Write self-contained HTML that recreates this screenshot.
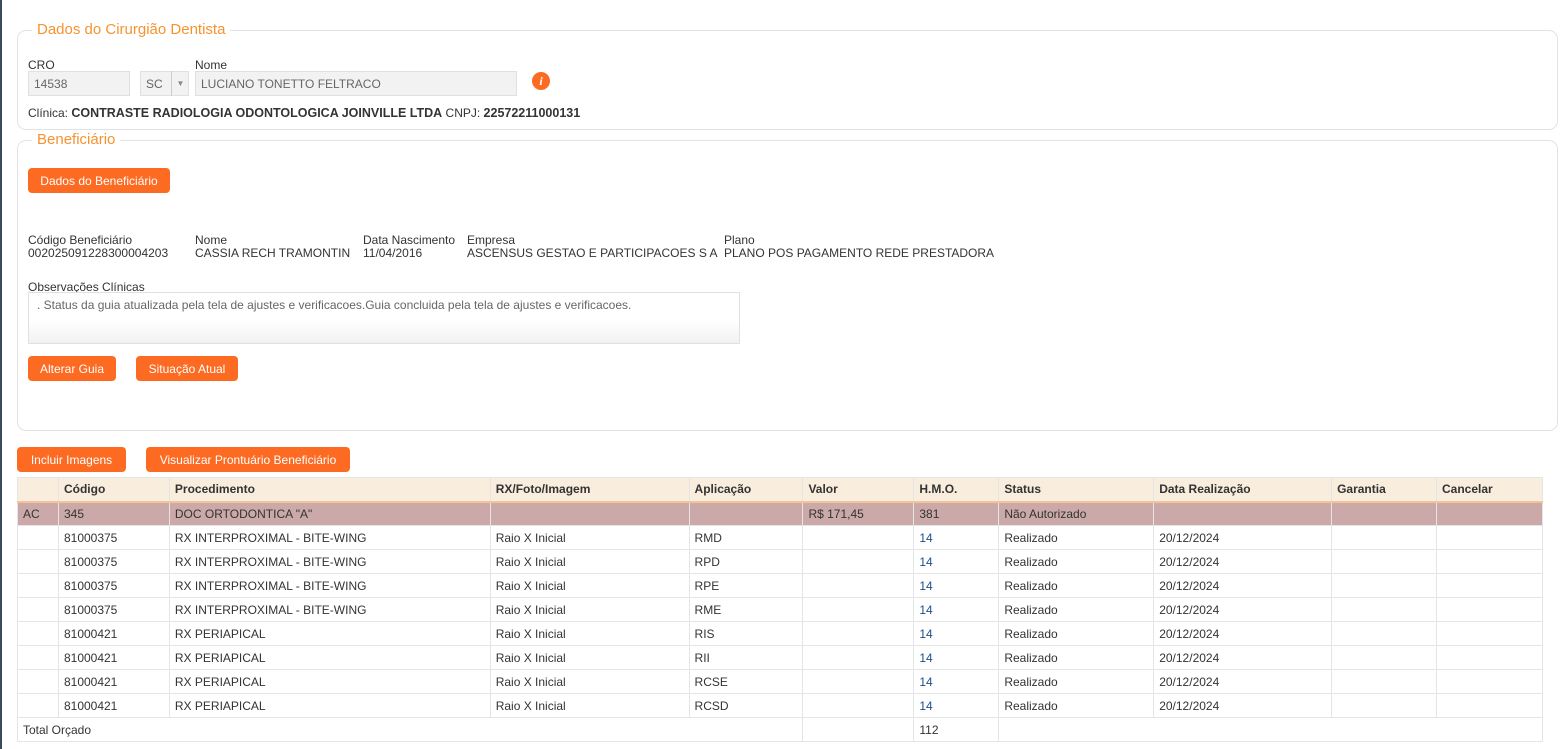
<!DOCTYPE html>
<html style="overflow:hidden"><head><meta charset="utf-8"><style>
*{box-sizing:border-box}
html,body{margin:0;width:1562px;height:749px;overflow:hidden}
body{background:#fff;font-family:"Liberation Sans",sans-serif;font-size:12px;color:#333;position:relative}
.a{position:absolute;white-space:nowrap}
.box{position:absolute;border:1px solid #e3e3e3;border-radius:9px}
.leg{position:absolute;background:#fff;color:#f7932f;font-size:15px;padding:0 5px}
.btn{position:absolute;background:#fd6a22;color:#fff;border-radius:4px;height:25px;line-height:25px;padding-top:1px;text-align:center;font-size:12px}
.inp{position:absolute;background:#f2f2f2;border:1px solid #e0e0e0;height:25px;line-height:24px;padding-left:5px;color:#666}
table{position:absolute;left:17px;top:477px;border-collapse:collapse;width:1526px;font-size:12px}
td,th{border:1px solid #e5e5e5;height:24px;padding:0 5px;text-align:left;white-space:nowrap}
th{background:#f9eddd;font-weight:bold;border-bottom:2px solid #f3c49a;color:#333}
tr.ac td{background:#cba9a8}
.b{color:#1d4f8c}
</style></head><body>
<div class="a" style="left:0;top:0;width:2px;height:749px;background:#3a4a5a"></div>
<div class="box" style="left:17px;top:30px;width:1541px;height:100px"></div>
<div class="leg" style="left:32px;top:21px">Dados do Cirurgião Dentista</div>
<div class="a" style="left:28px;top:58px">CRO</div>
<div class="a" style="left:195px;top:58px">Nome</div>
<div class="inp" style="left:28px;top:71px;width:102px">14538</div>
<div class="inp" style="left:140px;top:71px;width:49px">SC</div>
<div class="a" style="left:171px;top:71px;width:18px;height:25px;border-left:1px solid #ccc;color:#888;font-size:8px;line-height:25px;text-align:center">▼</div>
<div class="inp" style="left:195px;top:71px;width:322px">LUCIANO TONETTO FELTRACO</div>
<div class="a" style="left:532px;top:72px;width:18px;height:18px;border-radius:50%;background:#fd6a22;color:#fff;font:italic bold 12px 'Liberation Serif',serif;text-align:center;line-height:18px">i</div>
<div class="a" style="left:28px;top:106px">Clínica: <b style="font-size:12.5px">CONTRASTE RADIOLOGIA ODONTOLOGICA JOINVILLE LTDA</b> CNPJ: <b style="font-size:12.5px">22572211000131</b></div>

<div class="box" style="left:17px;top:140px;width:1541px;height:291px"></div>
<div class="leg" style="left:32px;top:131px">Beneficiário</div>
<div class="btn" style="left:28px;top:168px;width:142px">Dados do Beneficiário</div>
<div class="a" style="left:28px;top:234px;line-height:13px">Código Beneficiário<br>002025091228300004203</div>
<div class="a" style="left:195px;top:234px;line-height:13px">Nome<br>CASSIA RECH TRAMONTIN</div>
<div class="a" style="left:363px;top:234px;line-height:13px">Data Nascimento<br>11/04/2016</div>
<div class="a" style="left:467px;top:234px;line-height:13px">Empresa<br>ASCENSUS GESTAO E PARTICIPACOES S A</div>
<div class="a" style="left:724px;top:234px;line-height:13px">Plano<br>PLANO POS PAGAMENTO REDE PRESTADORA</div>
<div class="a" style="left:28px;top:280px">Observações Clínicas</div>
<div class="a" style="left:28px;top:292px;width:712px;height:52px;border:1px solid #e0e0e0;background:linear-gradient(#fff 55%,#f1f1f1);padding:5px 8px;color:#666">. Status da guia atualizada pela tela de ajustes e verificacoes.Guia concluida pela tela de ajustes e verificacoes.</div>
<div class="btn" style="left:28px;top:356px;width:88px">Alterar Guia</div>
<div class="btn" style="left:136px;top:356px;width:102px">Situação Atual</div>

<div class="btn" style="left:17px;top:447px;width:109px">Incluir Imagens</div>
<div class="btn" style="left:146px;top:447px;width:204px">Visualizar Prontuário Beneficiário</div>

<table>
<colgroup><col style="width:41px"><col style="width:111px"><col style="width:321px"><col style="width:199px"><col style="width:114px"><col style="width:111px"><col style="width:85px"><col style="width:155px"><col style="width:178px"><col style="width:105px"><col style="width:106px"></colgroup>
<tr><th></th><th>Código</th><th>Procedimento</th><th>RX/Foto/Imagem</th><th>Aplicação</th><th>Valor</th><th>H.M.O.</th><th>Status</th><th>Data Realização</th><th>Garantia</th><th>Cancelar</th></tr>
<tr class="ac"><td>AC</td><td>345</td><td>DOC ORTODONTICA "A"</td><td></td><td></td><td>R$ 171,45</td><td>381</td><td>Não Autorizado</td><td></td><td></td><td></td></tr>
<tr><td></td><td>81000375</td><td>RX INTERPROXIMAL - BITE-WING</td><td>Raio X Inicial</td><td>RMD</td><td></td><td class="b">14</td><td>Realizado</td><td>20/12/2024</td><td></td><td></td></tr>
<tr><td></td><td>81000375</td><td>RX INTERPROXIMAL - BITE-WING</td><td>Raio X Inicial</td><td>RPD</td><td></td><td class="b">14</td><td>Realizado</td><td>20/12/2024</td><td></td><td></td></tr>
<tr><td></td><td>81000375</td><td>RX INTERPROXIMAL - BITE-WING</td><td>Raio X Inicial</td><td>RPE</td><td></td><td class="b">14</td><td>Realizado</td><td>20/12/2024</td><td></td><td></td></tr>
<tr><td></td><td>81000375</td><td>RX INTERPROXIMAL - BITE-WING</td><td>Raio X Inicial</td><td>RME</td><td></td><td class="b">14</td><td>Realizado</td><td>20/12/2024</td><td></td><td></td></tr>
<tr><td></td><td>81000421</td><td>RX PERIAPICAL</td><td>Raio X Inicial</td><td>RIS</td><td></td><td class="b">14</td><td>Realizado</td><td>20/12/2024</td><td></td><td></td></tr>
<tr><td></td><td>81000421</td><td>RX PERIAPICAL</td><td>Raio X Inicial</td><td>RII</td><td></td><td class="b">14</td><td>Realizado</td><td>20/12/2024</td><td></td><td></td></tr>
<tr><td></td><td>81000421</td><td>RX PERIAPICAL</td><td>Raio X Inicial</td><td>RCSE</td><td></td><td class="b">14</td><td>Realizado</td><td>20/12/2024</td><td></td><td></td></tr>
<tr><td></td><td>81000421</td><td>RX PERIAPICAL</td><td>Raio X Inicial</td><td>RCSD</td><td></td><td class="b">14</td><td>Realizado</td><td>20/12/2024</td><td></td><td></td></tr>
<tr><td colspan="5">Total Orçado</td><td></td><td>112</td><td colspan="4"></td></tr>
</table>
</body></html>
